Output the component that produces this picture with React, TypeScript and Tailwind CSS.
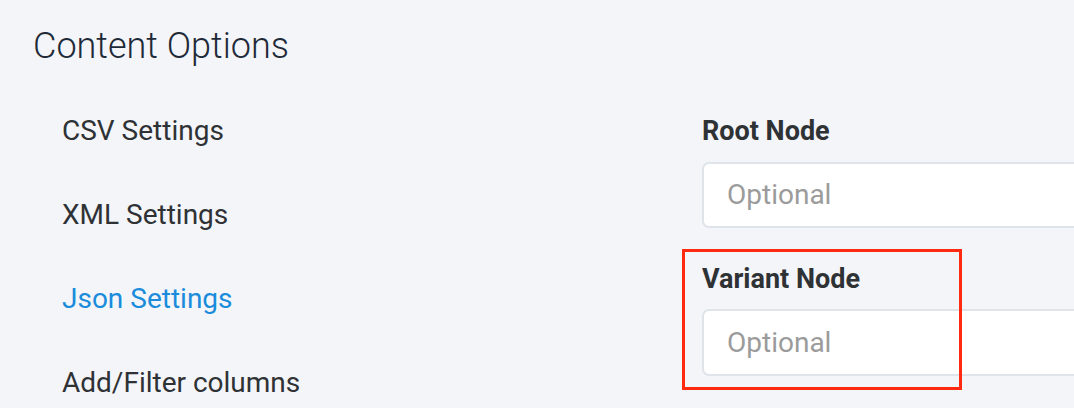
import React from "react";

const items = ["CSV Settings", "XML Settings", "Json Settings", "Add/Filter columns"];

export default function App() {
  return (
    <div
      className="relative h-[408px] w-full overflow-hidden bg-[#f4f5f9]"
      style={{ fontFamily: "Roboto, 'Noto Sans', sans-serif" }}
    >
      <div className="pl-[33px] pt-[26px] text-[36px] font-light leading-[40px] text-[#1e2a38]">
        Content Options
      </div>
      <div className="mt-[49px] flex">
        <div className="flex w-[702px] shrink-0 flex-col gap-[52px] pl-[62px]">
          {items.map((it) => (
            <div
              key={it}
              className={
                "text-[28px] leading-[32px] " +
                (it === "Json Settings" ? "text-[#1a8cdb]" : "text-[#2f3235]")
              }
            >
              {it}
            </div>
          ))}
        </div>
        <div className="flex w-[520px] shrink-0 flex-col">
          <div className="text-[27px] font-bold leading-[32px] text-[#2f3235]">Root Node</div>
          <div className="mt-[15px] flex h-[66px] items-center rounded-[7px] border-2 border-[#dfe4eb] bg-white pl-[23px] text-[28px] text-[#9b9b9b]">
            Optional
          </div>
          <div className="mt-[35px] text-[27px] font-bold leading-[32px] text-[#2f3235]">Variant Node</div>
          <div className="mt-[14px] flex h-[67px] items-center rounded-[7px] border-2 border-[#dfe4eb] bg-white pl-[23px] text-[28px] text-[#9b9b9b]">
            Optional
          </div>
        </div>
      </div>
      <div className="absolute left-[682px] top-[249px] h-[141px] w-[280px] border-[3px] border-[#ff2a0f]" />
    </div>
  );
}
